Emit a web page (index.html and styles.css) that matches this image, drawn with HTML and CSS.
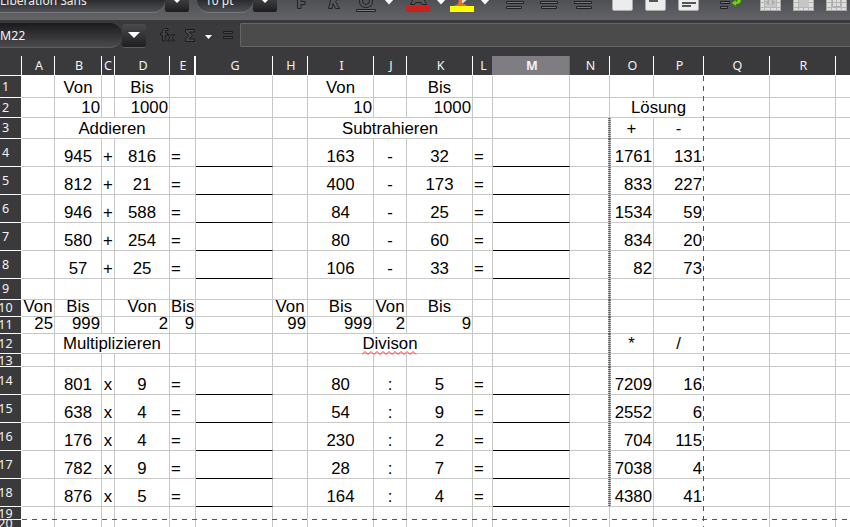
FILE: index.html
```html
<!DOCTYPE html>
<html lang="de">
<head>
<meta charset="utf-8">
<title>Rechenblatt</title>
<link rel="stylesheet" href="styles.css">
</head>
<body>
<div class="toolbar">
  <div class="combo font-name">Liberation Sans</div><div class="drop"></div>
  <div class="combo font-size">10 pt</div><div class="drop"></div>
  <svg width="41" height="20" viewBox="277 0 41 20"><path class="letter" d="M297.500-5H306V-2H301V1.500H305V4.500H301V8.500H297.500Z"/></svg>
  <svg width="32" height="20" viewBox="318 0 32 20"><path class="letter" d="M331.500-3L328.500 8.500H332L333 3.500L335.500 8.500H339.500L335.500 1.500L339-3"/></svg>
  <svg width="31" height="20" viewBox="350 0 31 20"><path class="letter" d="M359.500-3V1Q359.500 7.500 366 7.500T372.500 1V-3H369.500V1Q369.500 4.500 366 4.500T362.500 1V-3Z"/><path class="bar" d="M356.500 9.500h19v2h-19z"/></svg>
  <svg width="17" height="20" viewBox="381 0 17 20"><path class="arrow" d="M384-1h10L389 4.500Z"/></svg>
  <svg width="35" height="20" viewBox="398 0 35 20"><path class="letter" d="M414-3L410.500 4.500H414.500L415.500 2.500H421L422 4.500H426.500L423-3"/><path fill="#c9211e" d="M406 6h24v6h-24z"/></svg>
  <svg width="15" height="20" viewBox="433 0 15 20"><path class="arrow" d="M436-1h10L441 4.500Z"/></svg>
  <svg width="29" height="20" viewBox="448 0 29 20"><path fill="#dcdce0" d="M461-1h7l-6 5z"/><path fill="#e8702c" d="M459-1h3v4l6 3H454l4-2z"/><path fill="#ff0" d="M450 6h24v6h-24z"/></svg>
  <svg width="20" height="20" viewBox="477 0 20 20"><path class="arrow" d="M480-1h10L485 4.500Z"/></svg>
  <svg width="34" height="20" viewBox="497 0 34 20"><path class="bar" d="M506.500 1.500h17v2h-17zM506.500 6.500h15v2h-15z"/></svg>
  <svg width="34" height="20" viewBox="531 0 34 20"><path class="bar" d="M540.500 1.500h17v2h-17zM541.500 6.500h15v2h-15z"/></svg>
  <svg width="39" height="20" viewBox="565 0 39 20"><path class="bar" d="M574.500 1.500h17v2h-17zM576.500 6.500h15v2h-15z"/></svg>
  <svg width="36" height="20" viewBox="604 0 36 20"><rect class="page" x="612.500" y="-8" width="20" height="18.500" rx="1.500"/></svg>
  <svg width="33" height="20" viewBox="640 0 33 20"><rect class="page" x="645.500" y="-8" width="20" height="18.500" rx="1.500"/><path fill="#555" d="M649 0h9v2h-9z"/></svg>
  <svg width="37" height="20" viewBox="673 0 37 20"><rect class="page" x="678.500" y="-8" width="20" height="18.500" rx="1.500"/><path fill="#555" d="M682 2h14v2h-14zM682 5h9v2h-9z"/></svg>
  <svg width="42" height="20" viewBox="710 0 42 20"><path class="bar" d="M720.500 1.500h9v2h-9zM720.500 6.500h7v2h-7z"/><path fill="#73d216" stroke="#3d7a0a" stroke-width=".7" d="M737-1h4q1 5-5 5.500v2L731.500 3L736-.5V2q1.500-.5 1-3z"/></svg>
  <svg width="36" height="20" viewBox="752 0 36 20"><rect class="page table" x="760.500" y="-8" width="20" height="18.500"/><path class="rules" d="M761 7.500h19M764.500 0v10M770.500 7v3M776.500 0v10M761 2.500h3M777 2.500h3"/><path fill="#c6c6c6" d="M765 0h11v7h-11z"/><path fill="#aaa" d="M766 2.500l3-3v6zM775 2.500l-3-3v6z"/></svg>
  <svg width="33" height="20" viewBox="788 0 33 20"><rect class="page table" x="793.500" y="-8" width="20" height="18.500"/><path class="rules" d="M794 7.500h19M798.500 0v10M803.500 7v3M808.500 0v10M794 2.500h4M809 2.500h4"/><path fill="#c6c6c6" d="M799 0h10v7h-10z"/></svg>
  <svg width="29" height="20" viewBox="821 0 29 20"><rect class="page table" x="826.500" y="-8" width="20" height="18.500"/><path class="rules" d="M827 7.500h19M831.500 0v10M836.500 0v10M841.500 0v10M827 2.500h19"/><path fill="none" stroke="#aaa" d="M832.500-1h8v7.500h-8z"/></svg>
</div>
<div class="formula-bar">
  <div class="name-box">M22</div>
  <div class="drop"></div>
  <svg width="94" height="32" viewBox="146 20 94 32"><g class="symbol"><path d="M168 28.500h-2.500q-3 0-3 3V33h-2v2h2v6h2.500v-6h2.500v-2H165v-1q0-1.500 1-1.500h2zM167.500 34.500h2l1.500 2 1.500-2h2L172 38l2.500 3h-2L171 39.500 169.500 41h-2L170 38z"/><path d="M185.500 29.500h9v2.500h-5.500l3.500 3.500-3.500 3.500h5.500v2.500h-9V39l3.500-3.500-3.500-3.500z"/><path d="M223.500 31.500h9v2h-9zM223.500 36.500h9v2h-9z"/></g><path class="arrow" d="M205 35h7l-3.500 4z"/></svg>
  <div class="input-line"></div>
</div>
<main class="sheet" id="sheet"></main>
<script src="sheet.js"></script>
</body>
</html>
```
FILE: styles.css
```css
* { box-sizing: border-box; }
body {
  margin: 0;
  width: 850px;
  height: 527px;
  overflow: hidden;
  background: #fff;
  font: 12.5px/18px "Noto Sans", "Open Sans", sans-serif;
}
svg { display: block; flex: none; }

.toolbar {
  display: flex;
  height: 20px;
  overflow: hidden;
  background: linear-gradient(#4f5054, #636468);
}
.combo {
  flex: none;
  height: 13px;
  font-size: 12px;
  line-height: 2px;
  color: #eee;
  white-space: nowrap;
  background: linear-gradient(#2b2b2d, #505155);
  border-bottom: 1px solid #77787b;
  border-radius: 0 0 12px 0;
}
.font-name { width: 165px; }
.font-size { width: 56px; margin-left: 8px; padding-left: 8px; border-radius: 0 0 12px 12px; }
.drop {
  flex: none;
  display: flex;
  justify-content: center;
  width: 24px;
  height: 13px;
  background: linear-gradient(#3c3c3e, #1d1d1f);
  border-bottom: 1px solid #5c5d60;
  border-radius: 0 0 3px 3px;
}
.drop::after {
  content: "";
  width: 0;
  height: 0;
  border: 6px solid transparent;
  border-top-color: #fff;
  border-bottom: 0;
  margin-top: -3px;
}
.letter { fill: #55565a; stroke: #222; }
.bar { fill: #77787b; stroke: #222; }
.arrow { fill: #fff; }
.page { fill: #ececec; stroke: #aaa; }
.table { fill: #dedede; }
.rules { stroke: #b4b4b4; fill: none; }

.formula-bar {
  display: flex;
  height: 36px;
  padding-top: 3px;
  background: #3a3a3c;
}
.name-box {
  width: 122px;
  height: 25px;
  font-size: 12.3px;
  line-height: 25px;
  color: #f4f4f4;
  background: linear-gradient(#1b1b1c, #4a4a4c);
  border-bottom: 1px solid #5e5e60;
  border-radius: 0 12px 12px 0;
}
.formula-bar .drop {
  width: 24px;
  height: 24px;
  margin-top: 1px;
  border-radius: 3px;
  background: linear-gradient(#4b4b4d, #1e1e20);
}
.formula-bar .drop::after { margin-top: 8px; }
.formula-bar svg { margin-top: -3px; }
.symbol { fill: #4a4a4c; stroke: #1c1c1d; }
.input-line {
  flex: 1;
  height: 24px;
  background: #4b4b4b;
  border: 1px solid #666;
  border-right: 0;
  border-radius: 2px 0 0 2px;
}

.sheet { position: relative; }
.row {
  display: grid;
  grid-template-columns: 22px 33px 47px 13px 55px 26px 77px 35px 66px 33px 66px 20px 77px 40px 44px 50px 66px 66px 14px;
  grid-template-rows: 100%;
}
.row.head { height: 20px; background: #fff; }
.h22 { height: 22px; }
.h21 { height: 21px; }
.h20 { height: 20px; }
.h28 { height: 28px; }
.h17 { height: 17px; }
.h13 { height: 13px; }
.h8 { height: 8px; }

.head > div {
  height: 19px;
  line-height: 20px;
  text-align: center;
  padding-left: 2px;
  color: #f2f2f2;
  background: #3a3a3c;
  border-right: 1px solid #fff;
}
.head > .col-C { padding-left: 0; }
.head > .col-E { border-right-width: 2px; }
.head > .col-L { border-right-color: #7f7d82; }
.head > .col-M { background: #7f7d82; border-color: #6b696e; font-weight: bold; }
.head > .col-S, .cell.col-S { border-right: 0; }

.num {
  display: flex;
  align-items: center;
  justify-content: center;
  padding-right: 10px;
  overflow: hidden;
  color: #f2f2f2;
  background: #3a3a3c;
  border-bottom: 1px solid #fff;
  margin-right: 1px;
}
.num span { flex: none; }
.h13 .num { padding-top: 1px; }

.cell {
  position: relative;
  display: flex;
  align-items: flex-end;
  justify-content: center;
  min-width: 0;
  font: 16.8px/19px "Liberation Sans", Arial, sans-serif;
  color: #000;
  white-space: nowrap;
  border-right: 1px solid #c8c8c8;
  border-bottom: 1px solid #c8c8c8;
}
.cell span { flex: none; position: relative; }
.right { justify-content: flex-end; padding-right: 1px; }
.left { justify-content: flex-start; padding-left: 1px; }
.wide { grid-column: span 3; }
.pair { grid-column: span 2; padding-left: 4px; }
.answer { border-bottom-color: #000; }
.break { border-right-color: #fff; }
.h13.last .cell { border-bottom-color: #fff; }

.dots::after {
  content: "";
  position: absolute;
  z-index: 1;
  top: 0;
  right: -2px;
  bottom: -1px;
  width: 3px;
  background:
    linear-gradient(90deg, transparent 1px, rgba(60, 60, 60, .35) 1px 2px, transparent 2px),
    repeating-linear-gradient(#777 0 1px, #ddd 1px 2px);
}
.wave { position: absolute; left: 0; bottom: -2px; }
.wave path { fill: none; stroke: #f33; }

.sheet::before, .sheet::after { content: ""; position: absolute; z-index: 2; }
.sheet::before {
  top: 20px;
  left: 703px;
  width: 1px;
  height: 451px;
  background: repeating-linear-gradient(#555 0 5px, transparent 5px 10px);
}
.sheet::after {
  top: 463px;
  left: 22px;
  width: 828px;
  height: 1px;
  background: repeating-linear-gradient(90deg, #555 0 5px, transparent 5px 10px);
}
```
FILE: sheet.js
```js
const columns = "ABCDEGHIJKLMNOPQRS".split("");
const heights = [22, 20, 21, 28, 28, 28, 28, 28, 21, 17, 17, 20, 13, 28, 28, 28, 28, 28, 13, 8];

// Cell contents per row; a leading ">" aligns right, "<" aligns left.
const data = {
  1: { B: "Von", D: "Bis", I: "Von", K: "Bis" },
  2: { B: ">10", D: ">1000", I: ">10", K: ">1000", O: "Lösung" },
  3: { B: "Addieren", I: "Subtrahieren", O: "+", P: "-" },
  10: { A: "Von", B: "Bis", D: "Von", E: "<Bis", H: "Von", I: "Bis", J: "Von", K: "Bis" },
  11: { A: ">25", B: ">999", D: ">2", E: ">9", H: ">99", I: ">999", J: ">2", K: ">9" },
  12: { B: "Multiplizieren", I: "Divison", O: "*", P: "/" }
};
const tasks = {
  4: [945, "+", 816, 163, "-", 32, 1761, 131],
  5: [812, "+", 21, 400, "-", 173, 833, 227],
  6: [946, "+", 588, 84, "-", 25, 1534, 59],
  7: [580, "+", 254, 80, "-", 60, 834, 20],
  8: [57, "+", 25, 106, "-", 33, 82, 73],
  14: [801, "x", 9, 80, ":", 5, 7209, 16],
  15: [638, "x", 4, 54, ":", 9, 2552, 6],
  16: [176, "x", 4, 230, ":", 2, 704, 115],
  17: [782, "x", 9, 28, ":", 7, 7038, 4],
  18: [876, "x", 5, 164, ":", 4, 4380, 41]
};
for (const [row, t] of Object.entries(tasks)) {
  data[row] = { B: t[0], C: t[1], D: t[2], E: "<=", I: t[3], J: t[4], K: t[5], L: "<=", O: ">" + t[6], P: ">" + t[7] };
}

let html = '<div class="row head"><div></div>' +
  columns.map(c => `<div class="col-${c}">${c === "S" ? "" : c}</div>`).join("") + "</div>";

heights.forEach((height, index) => {
  const row = index + 1;
  const merged = row === 3 || row === 12;
  html += `<div class="row h${height}${row === 19 ? " last" : ""}"><div class="num"><span>${row}</span></div>`;
  for (const c of columns) {
    if (merged && "CDJK".includes(c)) continue;
    if (row === 2 && c === "P") continue;
    let text = String((data[row] || {})[c] ?? "");
    const classes = ["cell", "col-" + c];
    if (text[0] === ">") { classes.push("right"); text = text.slice(1); }
    if (text[0] === "<") { classes.push("left"); text = text.slice(1); }
    if (merged && "BI".includes(c)) classes.push("wide");
    if (row === 2 && c === "O") classes.push("pair", "break");
    if (c === "P") classes.push("break");
    if (tasks[row] && "GM".includes(c)) classes.push("answer");
    if (c === "N" && row >= 3 && row <= 18) classes.push("dots");
    let extra = "";
    if (text === "Divison") {
      let d = "M0 3.500";
      for (let x = 3; x <= 54; x += 3) d += `L${x} ${x % 2 ? 0.5 : 3.5}`;
      extra = `<svg class="wave" width="56" height="4" viewBox="0 0 56 4"><path d="${d}"/></svg>`;
    }
    html += `<div class="${classes.join(" ")}">${text ? `<span>${text}${extra}</span>` : ""}</div>`;
  }
  html += "</div>";
});
document.getElementById("sheet").innerHTML = html;
```
